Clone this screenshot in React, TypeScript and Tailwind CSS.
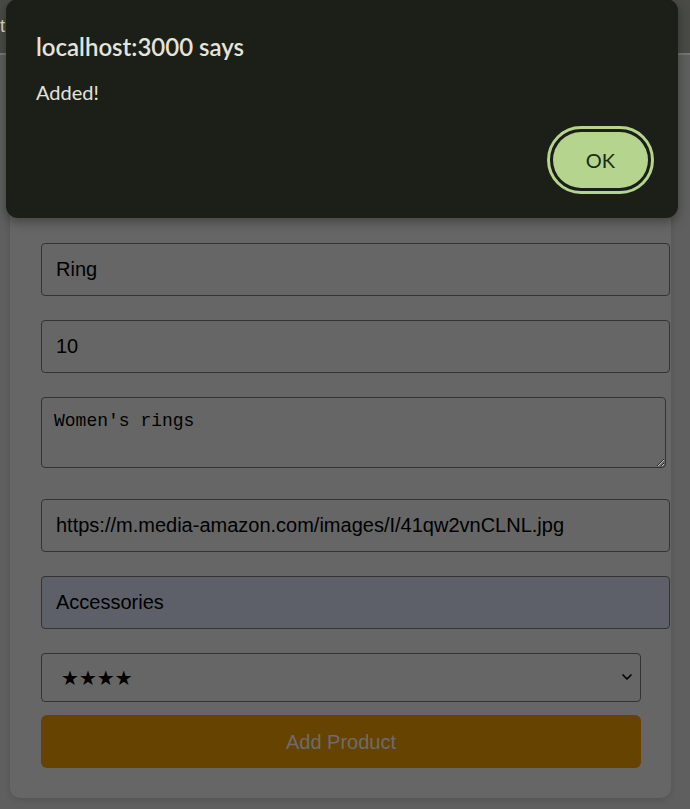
import { useState } from "react";
import { ChevronDown } from "lucide-react";

const inputCls =
  "block h-[53px] px-[14px] border border-[#333333] rounded-[4px] bg-transparent text-[20px] text-black outline-none [font-family:'Liberation_Sans',Arial,sans-serif]";

const App = () => {
  const [rating] = useState("4");

  return (
    <div className="relative min-h-[809px] bg-[#5f5f5f] overflow-hidden">
      {/* Nav */}
      <div className="h-[55px] bg-[#4a4a46] border-b-2 border-[#777772] flex items-center [font-family:'Liberation_Sans',Arial,sans-serif]">
        <span className="text-[#e6dfc0] text-[18px] pl-[0px]">t</span>
      </div>

      {/* Form card */}
      <div className="ml-[10px] w-[661px] mt-[20px] bg-[#666666] rounded-[10px] shadow-[0_2px_6px_rgba(0,0,0,0.12)] py-[30px] pl-[31px] pr-[30px]">
        <h2 className="h-[114px] mb-[24px] text-[28px] font-bold text-[#222] [font-family:'Liberation_Sans',Arial,sans-serif]">
          Add Product
        </h2>
        <div className="flex flex-col">
          <input className={inputCls + " w-[629px]"} defaultValue="Ring" />
          <input className={inputCls + " mt-[24px] w-[629px]"} defaultValue="10" />
          <textarea
            className="block mt-[24px] w-[625px] h-[71px] px-[12px] py-[12px] border border-[#333333] rounded-[4px] bg-transparent text-[18px] leading-[22px] text-black outline-none [font-family:'Liberation_Mono','DejaVu_Sans_Mono',monospace]"
            defaultValue="Women's rings"
          />
          <input
            className={inputCls + " mt-[31px] w-[629px]"}
            defaultValue="https://m.media-amazon.com/images/I/41qw2vnCLNL.jpg"
          />
          <input
            className={inputCls + " mt-[24px] w-[629px] !bg-[#5d6068]"}
            defaultValue="Accessories"
          />
          <div className="relative mt-[24px] w-[600px]">
            <select
              value={rating}
              onChange={() => {}}
              className="appearance-none block w-[600px] h-[49px] pl-[19px] pr-[30px] border border-[#333333] rounded-[4px] bg-transparent text-[20px] text-black outline-none [font-family:'DejaVu_Sans',sans-serif]"
            >
              <option value="4">★★★★</option>
            </select>
            <ChevronDown
              className="absolute right-[6px] top-[16px] pointer-events-none text-black"
              size={16}
              strokeWidth={2.5}
            />
          </div>
          <button className="mt-[13px] w-[600px] h-[53px] rounded-[6px] bg-[#664400] text-[#6c6c6c] text-[20px] [font-family:'Liberation_Sans',Arial,sans-serif]">
            Add Product
          </button>
        </div>
      </div>

      {/* Alert dialog */}
      <div className="absolute left-[6px] top-[-1px] w-[672px] h-[219px] bg-[#1c1e18] rounded-[12px] shadow-[0_4px_12px_rgba(0,0,0,0.35)] px-[30px] pt-[33px] [font-family:'Lato','Noto_Sans',sans-serif]">
        <div className="text-[24px] leading-[30px] font-semibold text-[#e4e3dc]">localhost:3000 says</div>
        <div className="mt-[17px] text-[20px] leading-[26px] text-[#e4e3dc]">Added!</div>
        <div className="flex justify-end mt-[27px]">
          <button className="w-[95px] h-[56px] rounded-full bg-[#b5d48e] text-[#1a2a10] text-[20px] outline-[3px] outline-solid outline-[#b5d48e] outline-offset-[3px]">
            OK
          </button>
        </div>
      </div>
    </div>
  );
};

export default App;
